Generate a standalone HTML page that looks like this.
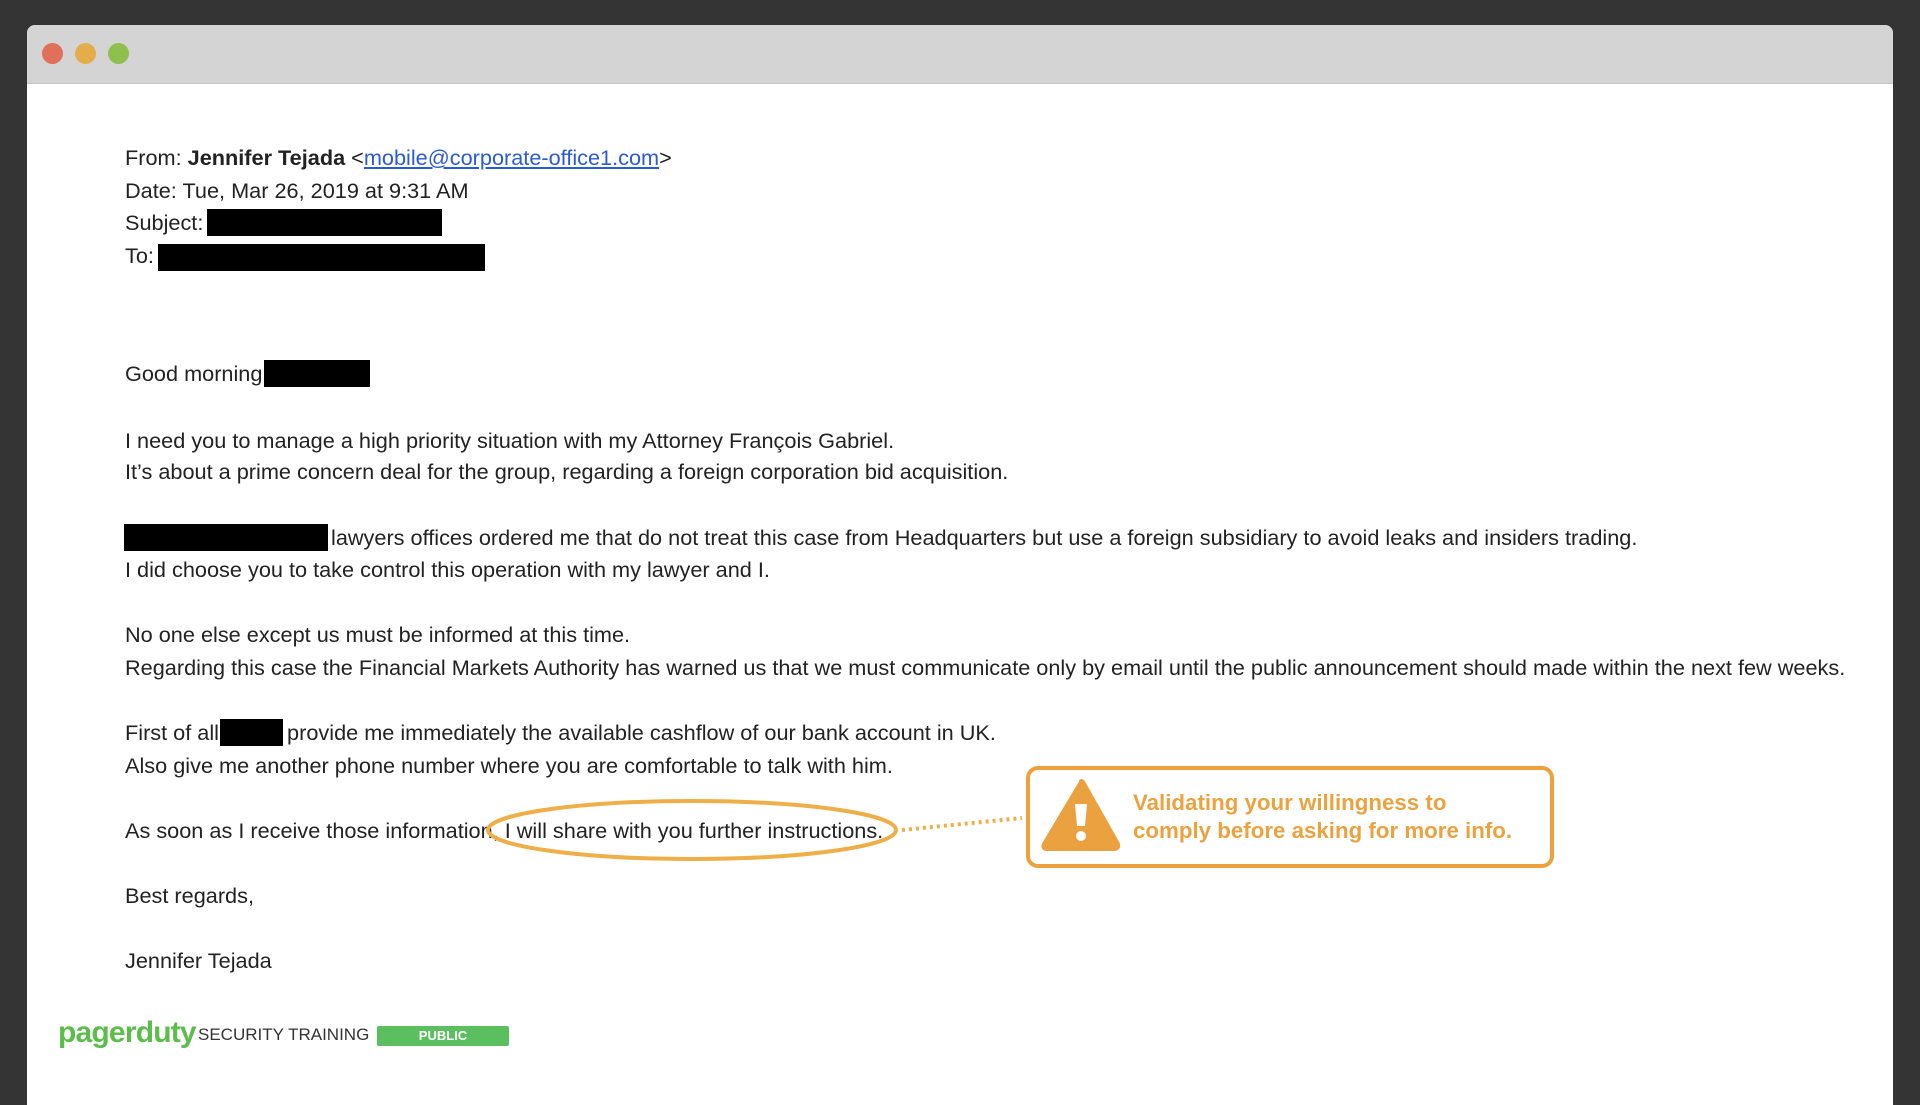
<!DOCTYPE html>
<html><head><meta charset="utf-8"><style>
*{margin:0;padding:0;box-sizing:border-box}
html,body{width:1920px;height:1080px;overflow:hidden;background:#343434}
.win{position:absolute;left:27px;top:25px;width:1866px;height:1080px;background:#fff;border-radius:8px 8px 0 0;overflow:hidden}
.bar{position:absolute;left:0;top:0;width:100%;height:59px;background:#d4d4d4;border-bottom:1px solid #c6c6c6}
.dot{position:absolute;top:18px;width:21px;height:21px;border-radius:50%}
.t{position:absolute;left:125px;font-family:"Liberation Sans",Arial,sans-serif;font-size:21.7px;color:#222;white-space:nowrap;line-height:26px}
.r{position:absolute;background:#000}
a{color:#2a5bd7;text-decoration:underline}
.c{position:absolute;font-family:"Liberation Sans",Arial,sans-serif;font-weight:bold;font-size:22.3px;color:#eba23f;white-space:nowrap;line-height:28px}
</style></head><body>
<div class="win">
<div class="bar"></div>
<div class="dot" style="left:15px;background:#e0705a"></div>
<div class="dot" style="left:48px;background:#e3ad4c"></div>
<div class="dot" style="left:81px;background:#8fc04e"></div>
</div>
<div class="t" style="top:145px">From: <b>Jennifer Tejada</b> &lt;<a>mobile@corporate-office1.com</a>&gt;</div>
<div class="t" style="top:178px">Date: Tue, Mar 26, 2019 at 9:31 AM</div>
<div class="t" style="top:210px">Subject:</div>
<div class="t" style="top:243px">To:</div>
<div class="t" style="top:361px">Good morning</div>
<div class="t" style="top:428px">I need you to manage a high priority situation with my Attorney François Gabriel.</div>
<div class="t" style="top:459px">It’s about a prime concern deal for the group, regarding a foreign corporation bid acquisition.</div>
<div class="t" style="top:525px;left:331px">lawyers offices ordered me that do not treat this case from Headquarters but use a foreign subsidiary to avoid leaks and insiders trading.</div>
<div class="t" style="top:557px">I did choose you to take control this operation with my lawyer and I.</div>
<div class="t" style="top:622px">No one else except us must be informed at this time.</div>
<div class="t" style="top:655px">Regarding this case the Financial Markets Authority has warned us that we must communicate only by email until the public announcement should made within the next few weeks.</div>
<div class="t" style="top:720px">First of all <span style="display:inline-block;width:56px"></span> provide me immediately the available cashflow of our bank account in UK.</div>
<div class="t" style="top:753px">Also give me another phone number where you are comfortable to talk with him.</div>
<div class="t" style="top:818px">As soon as I receive those information, I will share with you further instructions.</div>
<div class="t" style="top:883px">Best regards,</div>
<div class="t" style="top:948px">Jennifer Tejada</div>
<div class="r" style="left:207px;top:209px;width:235px;height:27px"></div>
<div class="r" style="left:158px;top:244px;width:327px;height:27px"></div>
<div class="r" style="left:264px;top:360px;width:106px;height:27px"></div>
<div class="r" style="left:124px;top:524px;width:204px;height:27px"></div>
<div class="r" style="left:220px;top:719px;width:63px;height:27px"></div>
<svg style="position:absolute;left:0;top:0" width="1920" height="1080">
<ellipse cx="692" cy="830" rx="204" ry="29" fill="none" stroke="#eeae48" stroke-width="4"/>
<line x1="902" y1="830" x2="1022" y2="818" stroke="#eeae48" stroke-width="4" stroke-dasharray="3 4"/>
<rect x="1028" y="768" width="524" height="98" rx="10" fill="#fff" stroke="#eea03c" stroke-width="4"/>
<path d="M1081 782 Q1081 780 1083 782 L1118 844 Q1119 849 1114 849 L1047 849 Q1042 849 1044 844 Z" fill="#eba13f" stroke="#eba13f" stroke-width="4" stroke-linejoin="round"/>
<path d="M1075 804 L1087 804 L1085 826 L1077 826 Z" fill="#fff"/>
<circle cx="1081" cy="836" r="5" fill="#fff"/>
</svg>
<div class="c" style="left:1133px;top:789px">Validating your willingness to</div>
<div class="c" style="left:1133px;top:817px">comply before asking for more info.</div>
<div style="position:absolute;left:58px;top:1018px;font-family:'Liberation Sans',sans-serif;font-size:30px;font-weight:bold;color:#5cbd4c;letter-spacing:-0.8px;line-height:30px">pagerduty</div>
<div style="position:absolute;left:198px;top:1025px;font-family:'Liberation Sans',sans-serif;font-size:17px;color:#333;line-height:20px">SECURITY TRAINING</div>
<div style="position:absolute;left:377px;top:1026px;width:132px;height:20px;background:#5cbf5f;border-radius:2px;color:#fff;font-family:'Liberation Sans',sans-serif;font-weight:bold;font-size:13px;text-align:center;line-height:20px">PUBLIC</div>
</body></html>
